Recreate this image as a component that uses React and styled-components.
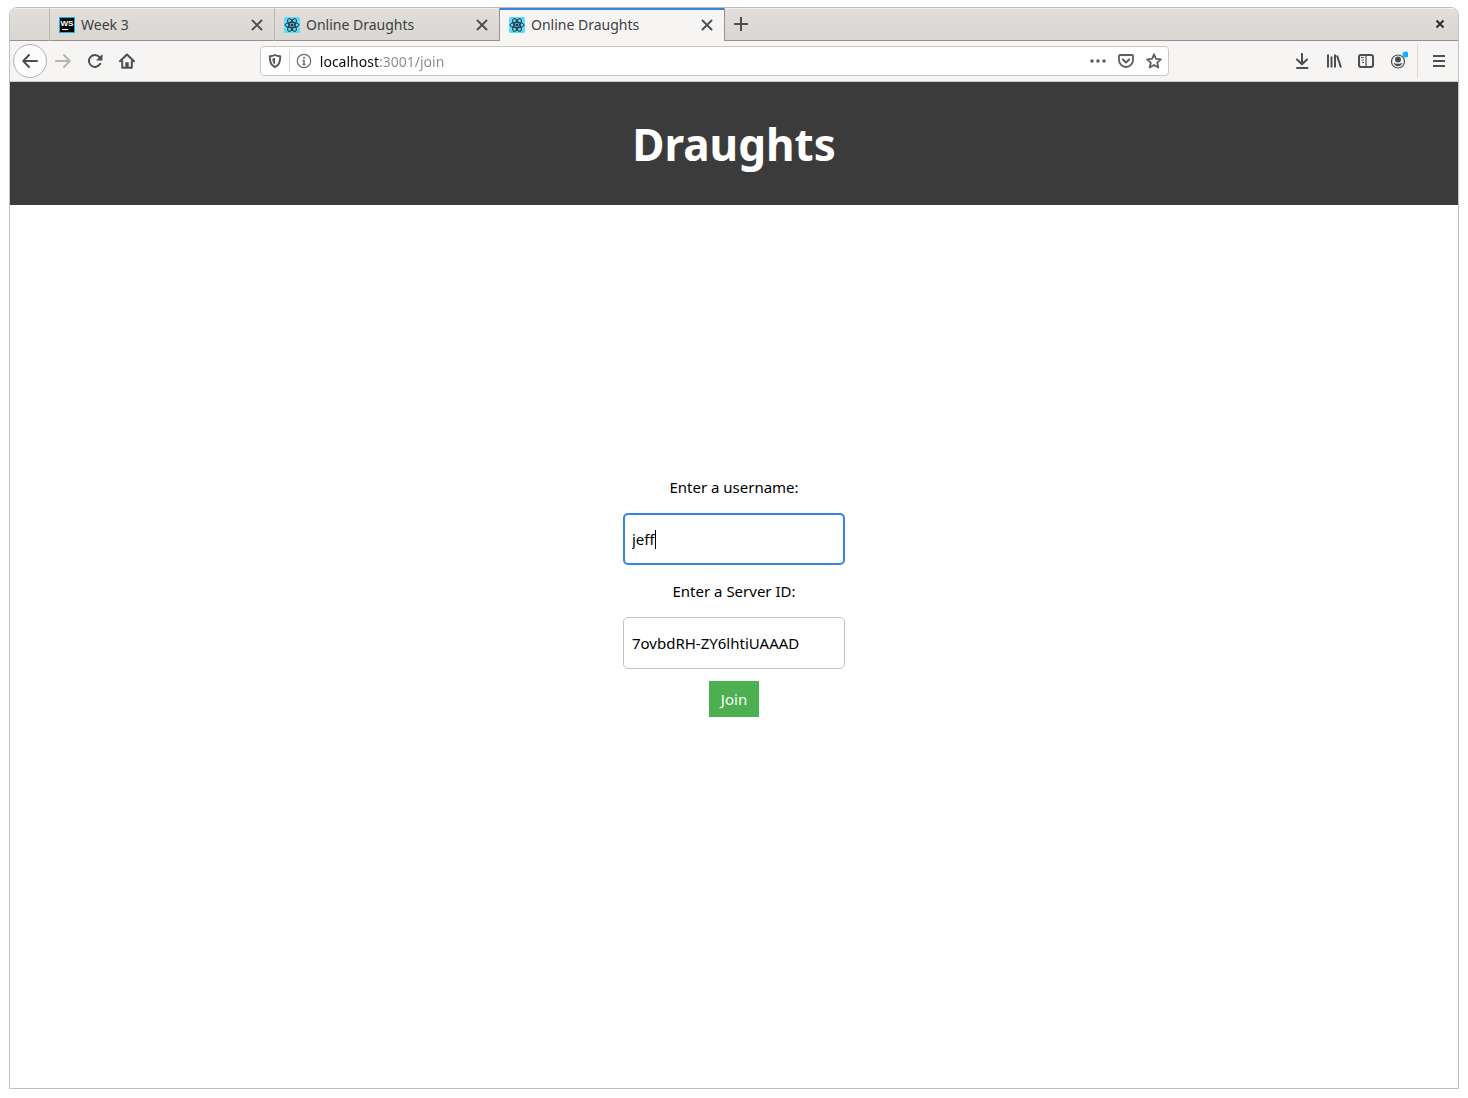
import React, { useState } from "react";
import styled, { createGlobalStyle, css } from "styled-components";

const GlobalStyle = createGlobalStyle`
  *, *::before, *::after { box-sizing: border-box; }
  body { margin: 0; background: #ffffff; }
  body, button, input { font-family: "Noto Sans", "Open Sans", sans-serif; }
`;

const Desktop = styled.div`
  min-height: 100vh;
  padding: 7px 9px 9px;
  display: flex;
`;

const BrowserWindow = styled.div`
  flex: 1;
  display: flex;
  flex-direction: column;
  border: 1px solid #bfbfbf;
  border-radius: 8px 8px 0 0;
  overflow: hidden;
`;

const TabStrip = styled.div`
  display: flex;
  height: 33px;
  background: linear-gradient(#e1dedb, #dad6d2);
  box-shadow: inset 0 -1px #96918e, inset 0 1px #f3f2f1;
`;

const StripStart = styled.div`
  width: 39px;
`;

const TabItem = styled.div`
  display: flex;
  align-items: center;
  width: 225px;
  padding: 0 7px 0 9px;
  border-left: 1px solid ${(p) => (p.$active ? "#96918e" : "#bab6b2")};
  color: #2e3436;
  ${(p) =>
    p.$active &&
    css`
      background: #f6f5f4;
      box-shadow: inset 0 2px #3584e4;
    `}
`;

const TabTitle = styled.button`
  display: flex;
  align-items: center;
  flex: 1;
  gap: 6px;
  padding: 0;
  border: 0;
  background: none;
  color: #3b4143;
  font-size: 14px;
  line-height: 20px;
  text-align: left;
  white-space: nowrap;
`;

const IconButton = styled.button`
  display: flex;
  align-items: center;
  justify-content: center;
  flex: none;
  width: ${(p) => p.$width || 32}px;
  height: ${(p) => p.$height || 32}px;
  padding: 0;
  border: 0;
  background: none;
  color: ${(p) => p.$color || "#4a5052"};
`;

const NewTab = styled(IconButton)`
  border-left: 1px solid #96918e;
`;

const StripFill = styled.div`
  flex: 1;
`;

const Toolbar = styled.nav`
  display: flex;
  align-items: center;
  height: 41px;
  padding: 0 3px;
  background: #f6f5f4;
  border-bottom: 1px solid #cdc9c5;
`;

const BackButton = styled(IconButton)`
  border: 1px solid #b4b1ae;
  border-radius: 50%;
  background: #fcfcfc;
`;

const FlexSpace = styled.div`
  flex: 117 1 0;
`;

const AddressBar = styled.div`
  display: flex;
  align-items: center;
  flex: 909 1 0;
  height: 30px;
  border: 1px solid #cdc7c2;
  border-radius: 4px;
  background: #ffffff;
`;

const AddressDivider = styled.div`
  width: 1px;
  height: 22px;
  background: #d3d3d3;
`;

const AddressInput = styled.input`
  flex: 1;
  min-width: 0;
  padding: 2px 0 0 2px;
  border: 0;
  outline: 0;
  font-size: 14px;
  line-height: 20px;
  color: transparent;
  background: linear-gradient(to right, #0c0c0d 61px, #8a8a8b 61px);
  background-clip: text;
  -webkit-background-clip: text;
`;

const ToolbarDivider = styled.div`
  width: 1px;
  height: 34px;
  margin: 0 5px 0 3px;
  background: #dcdad8;
`;

const PageHeader = styled.header`
  display: flex;
  align-items: center;
  justify-content: center;
  height: 123px;
  background: #3b3b3b;
`;

const PageTitle = styled.h1`
  margin: 0;
  color: #ffffff;
  font-size: 44px;
  font-weight: 700;
  line-height: 64px;
`;

const Page = styled.main`
  flex: 1;
  display: flex;
  align-items: center;
  justify-content: center;
  padding-bottom: 100px;
  background: #ffffff;
`;

const JoinForm = styled.form`
  display: flex;
  flex-direction: column;
  align-items: center;
  gap: 16px;
`;

const FieldLabel = styled.label`
  color: #000000;
  font-size: 15px;
  line-height: 20px;
`;

const FieldBox = styled.div`
  position: relative;
  display: flex;
`;

const TextField = styled.input`
  width: 222px;
  height: 52px;
  padding: 1px 8px 0;
  border: 1px solid #c4c2c0;
  border-radius: 5px;
  outline: 0;
  background: #ffffff;
  color: #000000;
  font-size: 15px;
  line-height: 20px;
  ${(p) =>
    p.$active &&
    css`
      padding: 1px 7px 0;
      border: 2px solid #3584e4;
      caret-color: transparent;
    `}
`;

const Caret = styled.span`
  position: absolute;
  top: 17px;
  left: 32px;
  width: 1px;
  height: 19px;
  background: #000000;
`;

const JoinButton = styled.button`
  height: 36px;
  margin-top: -4px;
  padding: 0 11px;
  border: 0;
  background: #4caf50;
  color: #ffffff;
  font-size: 15px;
  line-height: 20px;
  min-width: 50px;
`;

const stroke = { fill: "none", stroke: "currentColor", strokeWidth: 2, strokeLinecap: "round", strokeLinejoin: "round" };

const Glyph = ({ children, size = 16 }) => (
  <svg width={size} height={size} viewBox={`0 0 ${size} ${size}`} aria-hidden="true">
    {children}
  </svg>
);

const CloseGlyph = () => (
  <Glyph>
    <path d="M3.5 3.5l9 9M12.5 3.5l-9 9" {...stroke} strokeWidth="1.9" />
  </Glyph>
);

const ReactFavicon = () => (
  <Glyph>
    <rect width="16" height="16" rx="1.5" fill="#61dafb" />
    <g fill="none" stroke="#20343c" strokeWidth="1">
      <ellipse cx="8" cy="8" rx="7" ry="2.7" />
      <ellipse cx="8" cy="8" rx="7" ry="2.7" transform="rotate(60 8 8)" />
      <ellipse cx="8" cy="8" rx="7" ry="2.7" transform="rotate(120 8 8)" />
    </g>
    <circle cx="8" cy="8" r="1.5" fill="#20343c" />
  </Glyph>
);

const WebStormFavicon = () => (
  <Glyph>
    <rect width="16" height="16" fill="#12b5e0" />
    <rect x="1" y="1" width="14" height="14" fill="#050505" />
    <text x="8" y="9" textAnchor="middle" fontFamily="Liberation Sans, sans-serif" fontSize="8" fontWeight="700" fill="#fff">
      WS
    </text>
    <rect x="3" y="12" width="6" height="1" fill="#fff" />
  </Glyph>
);

const tabs = [
  { title: "Week 3", Icon: WebStormFavicon },
  { title: "Online Draughts", Icon: ReactFavicon },
  { title: "Online Draughts", Icon: ReactFavicon, active: true },
];

function Tab({ title, Icon, active }) {
  return (
    <TabItem $active={active}>
      <TabTitle type="button" aria-current={active ? "page" : undefined}>
        <Icon />
        {title}
      </TabTitle>
      <IconButton type="button" $width={20} $height={20} aria-label={`Close ${title}`}>
        <CloseGlyph />
      </IconButton>
    </TabItem>
  );
}

function NavigationBar() {
  const [address, setAddress] = useState("localhost:3001/join");
  return (
    <Toolbar aria-label="Navigation">
      <BackButton type="button" $width={34} $height={34} aria-label="Back">
        <Glyph>
          <path d="M15 8H1.5M7 2L1.3 8L7 14" {...stroke} />
        </Glyph>
      </BackButton>
      <IconButton type="button" $color="#b5b5b4" aria-label="Forward">
        <Glyph>
          <path d="M1 8h13.5M9 2l5.7 6L9 14" {...stroke} />
        </Glyph>
      </IconButton>
      <IconButton type="button" aria-label="Reload">
        <Glyph>
          <path d="M13.2 10.8A6 6 0 1 1 12.5 4" {...stroke} />
          <path d="M15.5 1v6.500H9z" fill="currentColor" />
        </Glyph>
      </IconButton>
      <IconButton type="button" aria-label="Home">
        <Glyph>
          <path d="M1 8.2L8 1.5l7 6.7" {...stroke} />
          <path d="M3.2 8v6.7h9.6V8" {...stroke} />
          <path d="M6.3 14.5V9.3h3.4v5.2z" fill="currentColor" />
        </Glyph>
      </IconButton>
      <FlexSpace />
      <AddressBar>
        <IconButton type="button" $width={28} $height={28} $color="#5a5a5c" aria-label="Tracking protection">
          <Glyph>
            <path d="M8 2C6.500 2.900 4.600 3.200 2.800 3.200C2.600 8.500 4 12.300 8 14C12 12.300 13.400 8.500 13.200 3.200C11.400 3.200 9.500 2.900 8 2z" {...stroke} />
            <path d="M8 4.700C7.200 5 6.200 5.300 5.300 5.400C5.400 8.300 6.100 10.400 8 11.600z" fill="currentColor" />
          </Glyph>
        </IconButton>
        <AddressDivider />
        <IconButton type="button" $width={28} $height={28} $color="#6a6a6c" aria-label="Site information">
          <Glyph>
            <circle cx="8" cy="8" r="6.700" fill="none" stroke="currentColor" strokeWidth="1.2" />
            <circle cx="8" cy="4.800" r="1" fill="currentColor" />
            <path d="M6.500 7.500H8V11.500M6.500 11.500h3" fill="none" stroke="currentColor" strokeWidth="1.4" />
          </Glyph>
        </IconButton>
        <AddressInput aria-label="Address" value={address} onChange={(e) => setAddress(e.target.value)} />
        <IconButton type="button" $width={28} $height={28} $color="#5e5e60" aria-label="Page actions">
          <Glyph>
            <circle cx="2" cy="8" r="1.800" fill="currentColor" />
            <circle cx="8" cy="8" r="1.800" fill="currentColor" />
            <circle cx="14" cy="8" r="1.800" fill="currentColor" />
          </Glyph>
        </IconButton>
        <IconButton type="button" $width={28} $height={28} $color="#5e5e60" aria-label="Save to Pocket">
          <Glyph>
            <path d="M2 2h12a1 1 0 0 1 1 1v4a7 7 0 0 1-14 0V3a1 1 0 0 1 1-1z" {...stroke} strokeWidth="1.8" />
            <path d="M4.800 6.500L8 9.500l3.200-3" {...stroke} />
          </Glyph>
        </IconButton>
        <IconButton type="button" $width={28} $height={28} $color="#5e5e60" aria-label="Bookmark">
          <Glyph>
            <path d="M8 1.300l2 4.500 4.900.5-3.700 3.300 1.100 4.900L8 12l-4.300 2.500 1.100-4.900L1.100 6.300 6 5.800z" {...stroke} strokeWidth="1.8" />
          </Glyph>
        </IconButton>
      </AddressBar>
      <FlexSpace />
      <IconButton type="button" aria-label="Downloads">
        <Glyph>
          <path d="M8 .8V11M3 6.500l5 4.800 5-4.800M3 15h10.500" {...stroke} />
        </Glyph>
      </IconButton>
      <IconButton type="button" aria-label="Library">
        <Glyph>
          <path d="M2 1.500v13M5.500 3.500v11M9 1.500v13M11 2.500l4 12" fill="none" stroke="currentColor" strokeWidth="2" />
        </Glyph>
      </IconButton>
      <IconButton type="button" aria-label="Sidebars">
        <Glyph>
          <rect x="1" y="2" width="14" height="12" rx="2" {...stroke} />
          <path d="M8 2v12" fill="none" stroke="currentColor" strokeWidth="1.2" />
          <path d="M3 4.500h3M3.500 7h2.500M4 9.500h2" fill="none" stroke="currentColor" strokeWidth="1" />
        </Glyph>
      </IconButton>
      <IconButton type="button" aria-label="Account">
        <svg width="20" height="20" viewBox="0 0 20 20" aria-hidden="true">
          <circle cx="10" cy="10.500" r="6.500" fill="none" stroke="currentColor" strokeWidth="1.2" />
          <circle cx="10" cy="8.500" r="3" fill="currentColor" />
          <path d="M5.500 12c1.200 0 2 .3 2.700.8h3.600c.7-.5 1.500-.8 2.700-.8-.8 2-2.300 3.200-4.500 3.200S6.300 14 5.500 12z" fill="currentColor" />
          <circle cx="17.500" cy="3.500" r="3" fill="#0ab2ff" />
        </svg>
      </IconButton>
      <ToolbarDivider />
      <IconButton type="button" aria-label="Menu">
        <Glyph>
          <path d="M2 3h12M2 8h12M2 13h12" fill="none" stroke="currentColor" strokeWidth="2" />
        </Glyph>
      </IconButton>
    </Toolbar>
  );
}

export default function App() {
  const [username, setUsername] = useState("jeff");
  const [serverId, setServerId] = useState("7ovbdRH-ZY6lhtiUAAAD");

  return (
    <>
      <GlobalStyle />
      <Desktop>
        <BrowserWindow>
          <TabStrip>
            <StripStart />
            {tabs.map((tab, i) => (
              <Tab key={i} {...tab} />
            ))}
            <NewTab type="button" $width={32} aria-label="New tab">
              <Glyph>
                <path d="M8 1v14M1 8h14" fill="none" stroke="currentColor" strokeWidth="2" />
              </Glyph>
            </NewTab>
            <StripFill />
            <IconButton type="button" $width={36} $color="#2e3436" aria-label="Close window">
              <Glyph>
                <path d="M4.500 4.500l7 7M11.500 4.500l-7 7" {...stroke} strokeLinecap="butt" strokeWidth="2.200" />
              </Glyph>
            </IconButton>
          </TabStrip>
          <NavigationBar />
          <PageHeader>
            <PageTitle>Draughts</PageTitle>
          </PageHeader>
          <Page>
            <JoinForm onSubmit={(e) => e.preventDefault()}>
              <FieldLabel htmlFor="username">Enter a username:</FieldLabel>
              <FieldBox>
                <TextField id="username" $active value={username} onChange={(e) => setUsername(e.target.value)} />
                <Caret />
              </FieldBox>
              <FieldLabel htmlFor="server-id">Enter a Server ID:</FieldLabel>
              <FieldBox>
                <TextField id="server-id" value={serverId} onChange={(e) => setServerId(e.target.value)} />
              </FieldBox>
              <JoinButton type="submit">Join</JoinButton>
            </JoinForm>
          </Page>
        </BrowserWindow>
      </Desktop>
    </>
  );
}
